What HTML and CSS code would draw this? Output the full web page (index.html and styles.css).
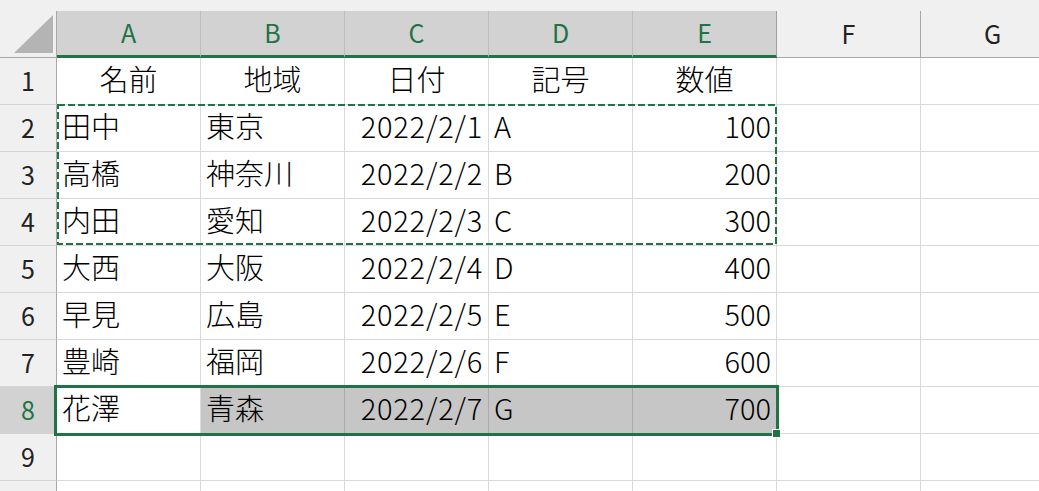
FILE: index.html
```html
<!DOCTYPE html>
<html lang="ja">
<head>
    <meta charset="UTF-8">
    <title>Sheet1</title>
    <link rel="stylesheet" href="styles.css">
</head>
<body>
    <div class="sheet">
        <div class="topbar"></div>
        <div class="grid">
            <!-- column headers -->
            <div class="corner"></div>
            <div class="ch on">A</div>
            <div class="ch on">B</div>
            <div class="ch on">C</div>
            <div class="ch on">D</div>
            <div class="ch on">E</div>
            <div class="ch">F</div>
            <div class="ch">G</div>

            <div class="rh">1</div>
            <div class="cell center">名前</div>
            <div class="cell center">地域</div>
            <div class="cell center">日付</div>
            <div class="cell center">記号</div>
            <div class="cell center">数値</div>
            <div class="cell"></div>
            <div class="cell"></div>

            <div class="rh">2</div>
            <div class="cell">田中</div>
            <div class="cell">東京</div>
            <div class="cell num date">2022/2/1</div>
            <div class="cell">A</div>
            <div class="cell num">100</div>
            <div class="cell"></div>
            <div class="cell"></div>

            <div class="rh">3</div>
            <div class="cell">高橋</div>
            <div class="cell">神奈川</div>
            <div class="cell num date">2022/2/2</div>
            <div class="cell">B</div>
            <div class="cell num">200</div>
            <div class="cell"></div>
            <div class="cell"></div>

            <div class="rh">4</div>
            <div class="cell">内田</div>
            <div class="cell">愛知</div>
            <div class="cell num date">2022/2/3</div>
            <div class="cell">C</div>
            <div class="cell num">300</div>
            <div class="cell"></div>
            <div class="cell"></div>

            <div class="rh">5</div>
            <div class="cell">大西</div>
            <div class="cell">大阪</div>
            <div class="cell num date">2022/2/4</div>
            <div class="cell">D</div>
            <div class="cell num">400</div>
            <div class="cell"></div>
            <div class="cell"></div>

            <div class="rh">6</div>
            <div class="cell">早見</div>
            <div class="cell">広島</div>
            <div class="cell num date">2022/2/5</div>
            <div class="cell">E</div>
            <div class="cell num">500</div>
            <div class="cell"></div>
            <div class="cell"></div>

            <div class="rh">7</div>
            <div class="cell">豊崎</div>
            <div class="cell">福岡</div>
            <div class="cell num date">2022/2/6</div>
            <div class="cell">F</div>
            <div class="cell num">600</div>
            <div class="cell"></div>
            <div class="cell"></div>

            <div class="rh on">8</div>
            <div class="cell">花澤</div>
            <div class="cell hl">青森</div>
            <div class="cell hl num date">2022/2/7</div>
            <div class="cell hl">G</div>
            <div class="cell hl num">700</div>
            <div class="cell"></div>
            <div class="cell"></div>

            <div class="rh">9</div>
            <div class="cell"></div>
            <div class="cell"></div>
            <div class="cell"></div>
            <div class="cell"></div>
            <div class="cell"></div>
            <div class="cell"></div>
            <div class="cell"></div>

            <!-- row 10, only its top edge shows -->
            <div class="rh"></div>
            <div class="cell"></div>
            <div class="cell"></div>
            <div class="cell"></div>
            <div class="cell"></div>
            <div class="cell"></div>
            <div class="cell"></div>
            <div class="cell"></div>
        </div>

        <!-- copy range (A2:E4) -->
        <svg class="copy-range" width="720" height="141">
            <rect x="1" y="1" width="718" height="139" fill="none" stroke="#217346" stroke-width="2" stroke-dasharray="7 3"></rect>
        </svg>

        <!-- selection (A8:E8) -->
        <div class="selection"></div>
        <div class="handle"></div>
    </div>
</body>
</html>
```

FILE: styles.css
```css
body {
    margin: 0;
    background: #fff;
    overflow: hidden;
    font-family: "Noto Sans CJK JP", "Noto Sans", sans-serif;
    font-weight: 300;
    color: #000;
}
.sheet {
    position: relative;
    width: 1039px;
    height: 491px;
    overflow: hidden;
}
.topbar {
    height: 11px;
    background: #f0f0f0;
}
.grid {
    display: grid;
    grid-template-columns: 57px repeat(7, 144px);
    grid-template-rows: 47px;
    grid-auto-rows: 47px;
}
.corner {
    position: relative;
    background: #f0f0f0;
    border-right: 1px solid #a8a8a8;
    border-bottom: 1px solid #a8a8a8;
}
.corner::after {
    content: "";
    position: absolute;
    left: 14px;
    top: 4px;
    width: 39px;
    height: 38px;
    background: #b4b4b4;
    clip-path: polygon(100% 0, 100% 100%, 0 100%);
}
.ch {
    display: flex;
    align-items: center;
    justify-content: center;
    padding-bottom: 2px;
    background: #f0f0f0;
    border-right: 1px solid #a8a8a8;
    border-bottom: 1px solid #a8a8a8;
    font-size: 25px;
    font-weight: 400;
    color: #222;
    box-sizing: border-box;
}
.ch.on {
    background: #d2d2d2;
    color: #217346;
    border-right-color: #bdbdbd;
    border-bottom: 3px solid #217346;
}
.ch.on:nth-child(6) {
    border-right-color: #a0a0a0;
}
.rh {
    display: flex;
    align-items: center;
    justify-content: center;
    padding-bottom: 2px;
    box-sizing: border-box;
    background: #f0f0f0;
    border-right: 1px solid #a8a8a8;
    border-bottom: 1px solid #d4d4d4;
    font-size: 25px;
    font-weight: 400;
    color: #222;
}
.rh.on {
    background: #d2d2d2;
    color: #217346;
}
.cell {
    display: flex;
    align-items: center;
    padding: 0 5px 7px 5px;
    box-sizing: border-box;
    border-right: 1px solid #dadada;
    border-bottom: 1px solid #dadada;
    font-size: 29px;
    white-space: nowrap;
}
.center {
    justify-content: center;
}
.num {
    justify-content: flex-end;
}
.date {
    letter-spacing: 0.8px;
    padding-right: 5px;
}
.hl {
    background: #c6c6c6;
    border-right-color: #ababab;
}
.copy-range {
    position: absolute;
    left: 57px;
    top: 104px;
}
.selection {
    position: absolute;
    left: 54px;
    top: 385px;
    width: 725px;
    height: 51px;
    box-sizing: border-box;
    border: 3px solid #217346;
}
.handle {
    position: absolute;
    left: 772px;
    top: 429px;
    width: 9px;
    height: 9px;
    box-sizing: border-box;
    background: #217346;
    border: 1px solid #fff;
}
```
